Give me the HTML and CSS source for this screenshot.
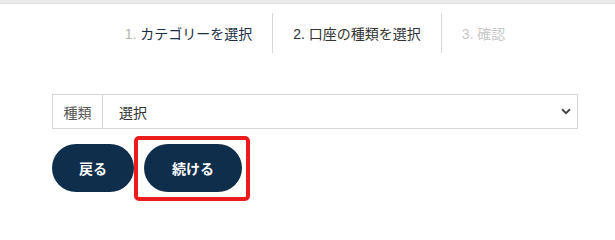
FILE: index.html
```html
<!DOCTYPE html>
<html lang="ja">
<head>
<meta charset="utf-8">
<link rel="stylesheet" href="styles.css">
</head>
<body>
<div class="topbar"></div>
<nav class="steps">
  <div class="step step-done"><span><span class="num">1.</span> <span class="label">カテゴリーを選択</span></span></div>
  <div class="step step-current">2. 口座の種類を選択</div>
  <div class="step step-next">3. 確認</div>
</nav>
<main class="content">
  <div class="field">
    <div class="field-label">種類</div>
    <div class="field-select">
      <span>選択</span>
      <svg class="chevron" width="10" height="7" viewBox="0 0 10 7"><path d="M1 1.2 L5 5.2 L9 1.2" fill="none" stroke="#444" stroke-width="2"/></svg>
    </div>
  </div>
  <div class="actions">
    <button class="btn btn-back">戻る</button>
    <div class="highlight-wrap">
      <button class="btn btn-continue">続ける</button>
      <div class="highlight"></div>
    </div>
  </div>
</main>
</body>
</html>
```
FILE: styles.css
```css
html, body {
  margin: 0;
  padding: 0;
  background: #fff;
  font-family: "Liberation Sans", "Noto Sans CJK JP", sans-serif;
}
.topbar {
  height: 3px;
  background: #ebebeb;
  border-bottom: 1px solid #e2e2e2;
}
.steps {
  display: flex;
  justify-content: center;
  margin-top: 9px;
  padding-left: 15px;
  height: 40px;
}
.step {
  display: flex;
  align-items: center;
  padding: 0 20px;
  font-size: 14px;
  white-space: pre;
}
.step + .step {
  border-left: 1px solid #d8d8d8;
}
.step-done .num { color: #b5b5b5; }
.step-done .label { color: #1a2e44; }
.step-current { color: #333; }
.step-next { color: #c8c8c8; }
.content {
  padding: 41px 37px 0 52px;
}
.field {
  display: flex;
  height: 35px;
  box-sizing: border-box;
  border: 1px solid #d6d6d6;
}
.field-label {
  display: flex;
  align-items: center;
  width: 49px;
  justify-content: center;
  border-right: 1px solid #d6d6d6;
  color: #555;
  font-size: 14px;
}
.field-select {
  flex: 1;
  display: flex;
  align-items: center;
  justify-content: space-between;
  padding: 0 6px 0 16px;
  color: #333;
  font-size: 14px;
}
.chevron { display: block; }
.actions {
  display: flex;
  align-items: flex-start;
  gap: 10px;
  margin-top: 15px;
  padding-bottom: 20px;
}
.btn {
  display: block;
  border: none;
  border-radius: 24px;
  background: #0f2e4c;
  color: #fff;
  font-family: "Noto Sans CJK JP", sans-serif;
  font-weight: 700;
  font-size: 14px;
  height: 48px;
  padding: 0;
}
.btn-back { width: 82px; }
.btn-continue { width: 98px; }
.highlight-wrap {
  position: relative;
  height: 48px;
}
.highlight {
  position: absolute;
  left: -10px;
  top: -8px;
  right: -8px;
  bottom: -9px;
  border: 4px solid #ec1c1c;
  border-radius: 5px;
}
```
